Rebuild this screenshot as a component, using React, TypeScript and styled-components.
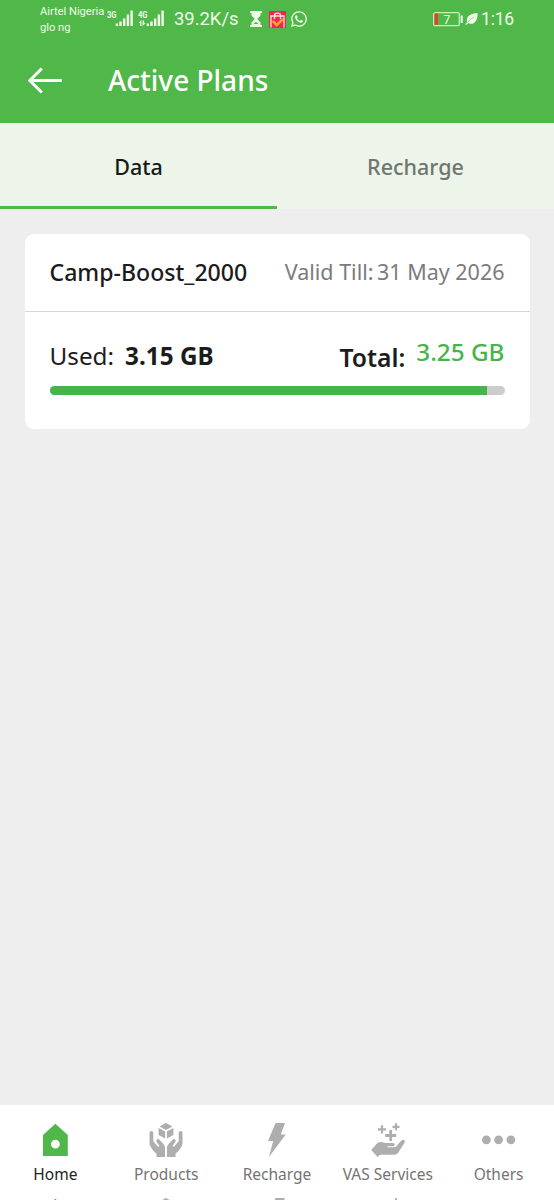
import React from 'react';
import styled, { createGlobalStyle } from 'styled-components';
import { FaWhatsapp } from 'react-icons/fa';

const GlobalStyle = createGlobalStyle`
  *, *::before, *::after { box-sizing: border-box; }
  html, body { margin: 0; padding: 0; background: #eeeeee; overflow: hidden; }
`;

const Screen = styled.div`
  width: 554px;
  height: 1200px;
  display: flex;
  flex-direction: column;
  overflow: hidden;
  background: #eeeeee;
  font-family: 'Noto Sans', 'Open Sans', sans-serif;
`;

const StatusBar = styled.div`
  height: 38px;
  flex: none;
  display: flex;
  align-items: center;
  justify-content: space-between;
  padding: 0 40px 0 40px;
  background: #50b848;
  color: #eefbe9;
  font-family: Roboto, sans-serif;
`;

const StatusGroup = styled.div`
  display: flex;
  align-items: center;
`;

const Carriers = styled.div`
  width: 67px;
  padding-top: 2px;
  font-size: 11.2px;
  line-height: 16px;
  letter-spacing: -0.03px;
  white-space: nowrap;
`;

const Speed = styled.span`
  width: 76px;
  margin-left: 7px;
  font-size: 18.5px;
  line-height: 38px;
  letter-spacing: -0.05px;
  white-space: nowrap;
`;

const Clock = styled.span`
  margin-left: 3px;
  font-size: 17.5px;
  line-height: 38px;
  letter-spacing: -0.2px;
`;

const AppBar = styled.header`
  height: 85px;
  flex: none;
  display: flex;
  align-items: center;
  padding-left: 27px;
  background: #50b848;
`;

const BackButton = styled.button`
  display: flex;
  padding: 0;
  border: 0;
  background: none;
`;

const Title = styled.h1`
  margin: 0 0 2px 45px;
  color: #ffffff;
  font-size: 28px;
  font-weight: 500;
  line-height: 36px;
`;

const Tabs = styled.nav`
  display: grid;
  grid-template-columns: 1fr 1fr;
  height: 86px;
  flex: none;
  background: #edf5ea;
`;

const Tab = styled.div<{ $active?: boolean }>`
  display: flex;
  align-items: center;
  justify-content: center;
  padding-top: ${p => (p.$active ? '3px' : '0')};
  border-bottom: ${p => (p.$active ? '3px solid #50b848' : '0')};
  color: ${p => (p.$active ? '#141a14' : '#70766f')};
  font-size: 21.5px;
  font-weight: 500;
`;

const Content = styled.main`
  flex: 1;
  padding: 25px 24.5px;
`;

const Card = styled.section`
  height: 195px;
  border-radius: 9px;
  background: #ffffff;
`;

const CardHeader = styled.div`
  height: 78px;
  display: flex;
  align-items: center;
  justify-content: space-between;
  padding: 0 25px 2px;
  border-bottom: 1.5px solid #d6d6d6;
`;

const PlanName = styled.h2`
  margin: 0;
  color: #1c1c1c;
  font-size: 23.1px;
  font-weight: 500;
  line-height: 30px;
`;

const Validity = styled.div`
  display: flex;
  gap: 3.5px;
  color: #7b7b7b;
  font-size: 21.5px;
  line-height: 30px;
  white-space: nowrap;
`;

const CardBody = styled.div`
  padding: 25px 25px 0;
`;

const Usage = styled.div`
  height: 40px;
  display: flex;
  justify-content: space-between;
  color: #1c1c1c;
  font-size: 24.3px;
  line-height: 38px;
  white-space: nowrap;
`;

const UsageItem = styled.div`
  display: flex;
  gap: 11px;
`;

const Label = styled.span<{ $strong?: boolean }>`
  font-size: ${p => (p.$strong ? '24.7px' : '24.3px')};
  font-weight: ${p => (p.$strong ? 600 : 400)};
  padding-top: ${p => (p.$strong ? '2px' : '0')};
`;

const Used = styled.span`
  font-weight: 700;
`;

const Total = styled.span`
  margin-top: -4px;
  color: #46b549;
  font-weight: 500;
`;

const Meter = styled.div`
  height: 9px;
  margin-top: 9px;
  border-radius: 5px;
  background: #cccccc;
  overflow: hidden;
`;

const MeterFill = styled.div`
  height: 100%;
  background: #46b549;
`;

const BottomNav = styled.nav`
  height: 95px;
  flex: none;
  display: grid;
  grid-template-columns: repeat(5, 1fr);
  grid-template-rows: 75px 75px;
  padding-top: 18px;
  background: #ffffff;
  overflow: hidden;
`;

const NavItem = styled.div<{ $active?: boolean }>`
  display: flex;
  flex-direction: column;
  align-items: center;
  color: ${p => (p.$active ? '#222222' : '#747474')};
  font-size: 15.5px;
  line-height: 22px;
  white-space: nowrap;

  svg {
    flex: none;
    margin-bottom: 6px;
    color: ${p => (p.$active ? '#50b848' : '#aeaeae')};
  }
`;

const Signal = ({ label, arrows }: { label: string; arrows?: boolean }) => (
  <svg width={arrows ? 31 : 29} height="20" viewBox={arrows ? '-2 0 31 20' : '0 0 29 20'} fill="currentColor">
    <text x="0" y="8.500" fontFamily="Roboto" fontSize="9" fontWeight="700" textLength="9.5" lengthAdjust="spacingAndGlyphs">{label}</text>
    {arrows && <path d="M2.200 17v-3H.7L3.500 11v6zM4.600 11.500v5.500l3-3H6.100v-2.500z" />}
    <path d="M8.700 14.500h2.400v2.500H8.700zM12.300 12.500h2.400V17h-2.400zM16 9.500h2.400V17H16zM19.700 5.500h2.400V17h-2.400zM23.400 1.500h2.400V17h-2.400z" />
  </svg>
);

const Hourglass = () => (
  <svg width="12" height="16" viewBox="0 0 12 16">
    <path fill="currentColor" d="M0 0h12v2h-1.500v2.500L7.300 8l3.200 3.500V14H12v2H0v-2h1.500v-2.500L4.700 8 1.500 4.500V2H0z" />
    <path d="M3.500 13l2.500-2.200L8.500 13z" fill="#50b848" />
  </svg>
);

const ShoppingApp = () => (
  <svg width="17" height="17" viewBox="0 0 17 17" style={{ marginLeft: 7 }}>
    <rect width="17" height="17" fill="#ee2851" />
    <path d="M2 16.500V5h13v11.500M5.500 8V4.200C5.500 1.300 11.500 1.300 11.500 4.200V8" fill="none" stroke="#ffe4dc" strokeWidth="1.300" />
    <path d="M3.700 9.800l4 4.200 6.200-5.800" fill="none" stroke="#fba52b" strokeWidth="2.600" />
  </svg>
);

const Battery = () => (
  <svg width="30" height="16" viewBox="0 0 30 16">
    <rect x=".7" y="1.700" width="25.600" height="13" rx="1.500" fill="none" stroke="#c9efbd" strokeWidth="1.300" />
    <rect x="1.500" y="2.500" width="3.500" height="11.400" fill="#e0442b" />
    <rect x="27.700" y="4.500" width="2" height="7.500" fill="currentColor" />
    <text x="10.500" y="12.500" fontFamily="Roboto" fontSize="12" fill="currentColor">7</text>
  </svg>
);

const Leaf = () => (
  <svg width="13" height="14" viewBox="0 0 14 14" style={{ marginLeft: 2 }}>
    <path d="M13.500.5C14 6.500 11.500 12.500 6 12.200c-1 0-1.900-.4-2.500-.8L1.200 13.500.3 12.700l2-2.200C.5 4 6.500 1 13.500.5z" fill="currentColor" />
    <path d="M3 10.500C5 8 7 6.300 9.500 5" stroke="#50b848" strokeWidth=".6" fill="none" />
  </svg>
);

const BackArrow = () => (
  <svg width="36" height="28" viewBox="0 0 36 28" fill="none" stroke="#fff" strokeWidth="3">
    <path d="M34.800 13.500H3M14.800 1.500l-12 12 12 12" />
  </svg>
);

const HomeIcon = () => (
  <svg width="34" height="34" viewBox="0 0 34 34" fill="currentColor">
    <path fillRule="evenodd" d="M17.300.7L29.800 12v21H5V12zM17.400 16.800a4.400 4.400 0 1 0 0 8.800 4.400 4.400 0 0 0 0-8.800z" />
  </svg>
);

const HandPath = 'M.5 10c0-1.300.8-2 1.900-2s1.900.7 1.900 2v8.300l4.300 5c.9 1 2.100 0 1.400-1.100l-2.300-3.100c-1.300-2.100 1-4 2.700-2.400l3.800 4c1.300 1.400 1.800 2.500 1.800 4.200V34H7.500v-3.300c-2.300-1.700-4.300-4-5.500-6.500C.8 22.500.5 21.500.5 20z';

const ProductsIcon = () => (
  <svg width="34" height="34" viewBox="0 0 34 34" fill="currentColor">
    <path d="M17 0l6.400 3.500L17 7l-6.400-3.500zM9.600 5l6.500 3.600v7L9.600 12zM24.400 5l-6.500 3.600v7l6.500-3.600z" />
    <path d={HandPath} />
    <path d={HandPath} transform="matrix(-1 0 0 1 34 0)" />
  </svg>
);

const RechargeIcon = () => (
  <svg width="34" height="34" viewBox="0 0 34 34" fill="currentColor">
    <path d="M15.500 0H25l-4.200 11.500h5L8.900 34l4.300-16H8z" />
  </svg>
);

const ServicesIcon = () => (
  <svg width="34" height="34" viewBox="0 0 34 34" fill="currentColor">
    <path fill="none" stroke="currentColor" strokeWidth="2.200" d="M11 2.300v8.200M6.900 6.400h8.200M25 .3v7M21.500 3.800h7" />
    <path fill="none" stroke="currentColor" strokeWidth="2.800" d="M19.700 7v11M14.200 12.500h11" />
    <path d="M.2 27l5.300-6c1.300-1.400 3-1.900 4.600-1.900 2 0 2.600 1 4.600 1h7.300c2.300 0 2.300 3.200 0 3.200h-5.500v1h6.500c1 0 1.700-.4 2.300-1.100l4.900-5.500c1.800-2 4.600-.2 3.300 2L28.300 28c-1.300 2.300-2.700 3.700-5.300 3.700H9.800c-.9 0-1.200.4-1.600.8l-1.500 1.500z" />
  </svg>
);

const MoreIcon = () => (
  <svg width="34" height="34" viewBox="0 0 34 34" fill="currentColor">
    <circle cx="4.400" cy="16.800" r="4.400" />
    <circle cx="16.600" cy="16.800" r="4.400" />
    <circle cx="28.900" cy="16.800" r="4.400" />
  </svg>
);

const navItems = [
  { label: 'Home', Icon: HomeIcon, active: true },
  { label: 'Products', Icon: ProductsIcon },
  { label: 'Recharge', Icon: RechargeIcon },
  { label: 'VAS Services', Icon: ServicesIcon },
  { label: 'Others', Icon: MoreIcon },
];

export default function App() {
  return (
    <>
      <GlobalStyle />
      <Screen>
        <StatusBar>
          <StatusGroup>
            <Carriers>
              <div>Airtel Nigeria</div>
              <div>glo ng</div>
            </Carriers>
            <Signal label="3G" />
            <Signal label="4G" arrows />
            <Speed>39.2K/s</Speed>
            <Hourglass />
            <ShoppingApp />
            <FaWhatsapp size={18} style={{ marginLeft: 4 }} />
          </StatusGroup>
          <StatusGroup>
            <Battery />
            <Leaf />
            <Clock>1:16</Clock>
          </StatusGroup>
        </StatusBar>
        <AppBar>
          <BackButton aria-label="Back">
            <BackArrow />
          </BackButton>
          <Title>Active Plans</Title>
        </AppBar>
        <Tabs>
          <Tab $active>Data</Tab>
          <Tab>Recharge</Tab>
        </Tabs>
        <Content>
          <Card>
            <CardHeader>
              <PlanName>Camp-Boost_2000</PlanName>
              <Validity>
                <span>Valid Till:</span>
                <span>31 May 2026</span>
              </Validity>
            </CardHeader>
            <CardBody>
              <Usage>
                <UsageItem>
                  <Label>Used:</Label>
                  <Used>3.15 GB</Used>
                </UsageItem>
                <UsageItem>
                  <Label $strong>Total:</Label>
                  <Total>3.25 GB</Total>
                </UsageItem>
              </Usage>
              <Meter>
                <MeterFill style={{ width: '96.2%' }} />
              </Meter>
            </CardBody>
          </Card>
        </Content>
        <BottomNav>
          {navItems.map(({ label, Icon, active }) => (
            <NavItem key={label} $active={active}>
              <Icon />
              {label}
            </NavItem>
          ))}
          {navItems.map(({ label, Icon, active }) => (
            <NavItem key={`${label}-next`} $active={active} aria-hidden>
              <Icon />
            </NavItem>
          ))}
        </BottomNav>
      </Screen>
    </>
  );
}
